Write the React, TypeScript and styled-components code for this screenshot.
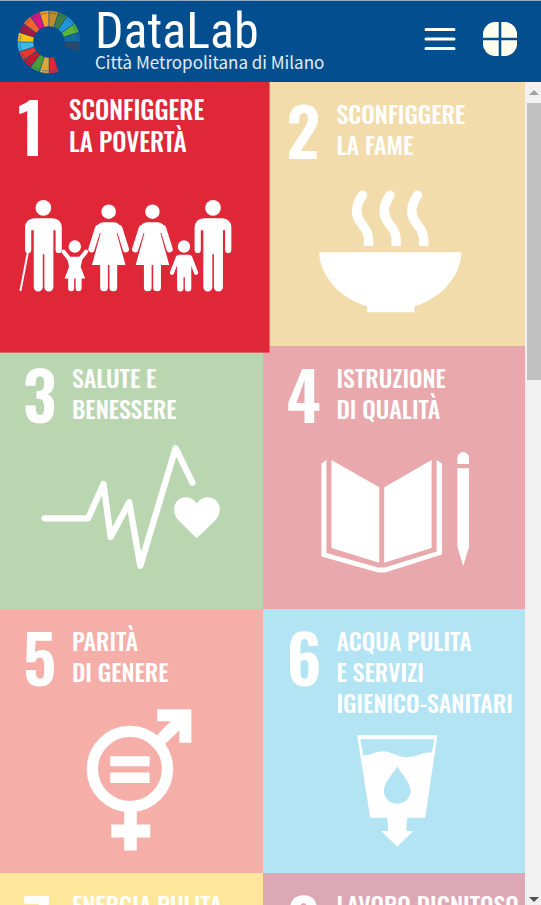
import React from "react";
import styled, { createGlobalStyle } from "styled-components";

const GlobalStyle = createGlobalStyle`
  *, *::before, *::after { box-sizing: border-box; }
  body { margin: 0; background: #fff; }
`;

const Page = styled.div`
  display: flex;
  flex-direction: column;
  height: 100vh;
  overflow: hidden;
`;

const Header = styled.header`
  flex: none;
  display: flex;
  align-items: center;
  height: 82px;
  padding: 0 24px 0 16px;
  border-top: 1px solid #8fa9c6;
  background: #034e8f;
  color: #fff;
`;

const Brand = styled.a`
  display: flex;
  align-items: center;
  gap: 13px;
  margin-right: auto;
  color: inherit;
  text-decoration: none;
  white-space: nowrap;
`;

const BrandText = styled.span`
  display: grid;
  padding-bottom: 2px;
`;

const BrandName = styled.span`
  font: 400 50px/42px "Roboto Condensed", Roboto, sans-serif;
`;

const BrandPlace = styled.span`
  font: 400 17px/20px "Noto Sans CJK SC", "Noto Sans", sans-serif;
  color: #e3ecf4;
`;

const Tools = styled.div`
  display: flex;
  align-items: center;
  gap: 26px;
  padding-bottom: 5px;
`;

const IconButton = styled.button`
  display: grid;
  place-items: center;
  padding: 0;
  border: 0;
  background: none;
  color: #fffff0;
  cursor: pointer;
`;

const Body = styled.div`
  flex: 1;
  display: flex;
  min-height: 0;
`;

const Goals = styled.main`
  flex: 1;
  display: grid;
  grid-template-columns: repeat(2, 1fr);
  align-content: start;
  overflow: hidden;
`;

const Tile = styled.a<{ $color: string; $active?: boolean }>`
  display: grid;
  aspect-ratio: 262 / 263;
  background: ${(p) => p.$color};
  color: #fff;
  text-decoration: none;
  font-family: Oswald, "Roboto Condensed", "Liberation Sans", sans-serif;
  ${(p) => p.$active && "position: relative; z-index: 1; transform: scale(1.05);"}

  > * { grid-area: 1 / 1; }
`;

const Heading = styled.span<{ $wide?: boolean }>`
  display: grid;
  grid-template-columns: ${(p) => (p.$wide ? "50px" : "49px")} 1fr;
  align-items: start;
  align-self: start;
  padding: 16px 0 0 ${(p) => (p.$wide ? "24px" : "23px")};
`;

const Numeral = styled.span`
  font-size: 66px;
  line-height: 62px;
  font-weight: 600;
`;

const Title = styled.span`
  font-size: 24px;
  line-height: 31px;
  font-weight: 500;
  white-space: pre;
`;

const Art = styled.svg`
  width: 100%;
  height: 100%;
  fill: #fff;
`;

const Scrollbar = styled.div`
  flex: none;
  display: flex;
  flex-direction: column;
  align-items: flex-end;
  width: 16px;
  background: #f1f1f1;
`;

const ScrollArrow = styled.button<{ $height: number }>`
  display: grid;
  place-items: center;
  width: 14px;
  height: ${(p) => p.$height}px;
  padding: 0;
  border: 0;
  background: none;
`;

const Track = styled.div`
  flex: 1;
  width: 14px;
`;

const Thumb = styled.div`
  height: 35%;
  background: #c1c1c1;
`;

const wheelColors = [
  "#e5243b", "#dda63a", "#4c9f38", "#c5192d", "#e5392d", "#3fb8e4",
  "#fcc30b", "#a21942", "#f1662c", "#dd1380", "#f99d26", "#bf8b2e",
  "#3f7e44", "#2398d8", "#5cb533", "#176a9d", "#2b4a6b",
];

function wheelSegment(index: number) {
  const point = (radius: number, degrees: number) => {
    const a = (degrees * Math.PI) / 180;
    return `${(32 + radius * Math.cos(a)).toFixed(2)} ${(32 + radius * Math.sin(a)).toFixed(2)}`;
  };
  const from = 72 + index * 18;
  const to = from + 18;
  return `M${point(31.5, from)}A31.5 31.5 0 0 1 ${point(31.5, to)}L${point(15.5, to)}A15.5 15.5 0 0 0 ${point(15.5, from)}Z`;
}

function Wheel() {
  return (
    <svg width="66" height="66" viewBox="-1 -1 66 66" aria-hidden="true">
      {wheelColors.map((color, i) => (
        <path key={color} d={wheelSegment(i)} fill={color} stroke="#034e8f" strokeWidth=".5" />
      ))}
      <circle cx="32" cy="32" r="29" fill="none" stroke="#034e8f" strokeWidth=".5" strokeDasharray="7 2.1" />
    </svg>
  );
}

const man =
  "M0 145a9 9 0 0 1 9-9h18.7a9 9 0 0 1 9 9v22.7a3.1 3.1 0 0 1-6.2 0V148h-2.2v56.7a4.5 4.5 0 0 1-9 0V172h-1.6v32.7a4.5 4.5 0 0 1-9 0V148H6.2v19.7a3.1 3.1 0 0 1-6.2 0z";

function Woman({ x }: { x: number }) {
  return (
    <g transform={`translate(${x} 0)`}>
      <circle cy="129.5" r="7.2" />
      <path d="M-13 147q2-7 8-7h10q6 0 8 7l-5 4 8.800 31.700h-33.500l8.700-31.700z" />
      <path d="M-10.600 146-17.200 167M10.600 146 17.200 167" stroke="#fff" strokeWidth="6.200" strokeLinecap="round" />
      <path d="M-8.500 180h7.700v25.200a3.850 3.850 0 0 1-7.700 0zM.8 180h7.700v25.200a3.850 3.850 0 0 1-7.700 0z" />
    </g>
  );
}

const Family = () => (
  <g transform="translate(6.240 6.270) scale(.952)">
    <circle cx="43.300" cy="125.700" r="7.800" />
    <path d={man} transform="translate(25 0)" />
    <path d="M28 169 20.500 208" stroke="#fff" strokeWidth="2" strokeLinecap="round" />
    <Woman x={108.5} />
    <Woman x={152.2} />
    <circle cx="212.700" cy="125.700" r="7.800" />
    <path d={man} transform="translate(194.300 0)" />
    <circle cx="74.700" cy="164.300" r="6.200" />
    <path d="M63.500 169.500 69 176.500M85.800 169.500 80.300 176.500" stroke="#fff" strokeWidth="4.200" strokeLinecap="round" />
    <path d="M69 174.400h11.500l1.500 4-1.500 6 4.500 11.800H64.500L69 184.300l-1.500-6zM68 195h6v11a3 3 0 0 1-6 0zM75.500 195h6v11a3 3 0 0 1-6 0z" />
    <circle cx="183.700" cy="164.300" r="6.200" />
    <path d="M177.500 175.500 171.700 190.500M190 175.500 195.800 190.500" stroke="#fff" strokeWidth="4.200" strokeLinecap="round" />
    <path d="M179 172.400h9.500q2.500 0 2.500 3V206a3.200 3.200 0 0 1-6.400 0v-11h-1.400v11a3.200 3.200 0 0 1-6.400 0v-30.600q0-3 2.200-3z" />
  </g>
);

const Bowl = () => (
  <g>
    <path d="M56 170h142c-1 23-18 45-47 54v5.700h-47V224C75 215 57 193 56 170z" />
    {[0, 27.5, 55].map((x) => (
      <g key={x} transform={`translate(${x} 0)`}>
        <circle cx="99.200" cy="113" r="4.700" />
        <path d="M99.200 113C92.500 123 92 131 96 138c4.500 7.500 10.500 10 9.300 25.700" fill="none" stroke="#fff" strokeWidth="9.400" />
      </g>
    ))}
  </g>
);

const Heartbeat = () => (
  <g>
    <path
      d="M44.500 172H88L103.300 137.700 110.500 190.700 129 156 140 219.300 175.300 102 192 136.300"
      fill="none" stroke="#fff" strokeWidth="6.300" strokeLinecap="round" strokeLinejoin="round"
    />
    <path d="M196.300 192 179 175C169 165 174 151 186 151c4 0 8 2.500 10.300 6.300C199 153.500 203 151 207 151c12 0 17 14 7 24z" />
  </g>
);

const Book = () => (
  <path d="M68.300 113.700 116 141v75.300L68.300 201.700zM121 141l47.300-27.300v88L121 216.300zM58.300 117.300l5-3.600v92.800L115 221h6.500l51.800-16V113.700l5.400 3.600V208L122 226h-7L58.300 210zM194 117.700v-6a5.850 5.850 0 0 1 11.700 0v6zM194 122h11.700v78.300l-5.900 19.400-5.800-19.400z" />
);

const Equality = () => (
  <g>
    <circle cx="129.700" cy="159.700" r="37.500" fill="none" stroke="#fff" strokeWidth="11.300" />
    <path d="M110 147h39.300v10H110zM110 163.300h39.300v10.400H110zM124 201h12.500v14H150v13h-13.500v13H124v-13h-13v-13h13zM157 100h34v33.500h-12V121l-15 14.500-8-9L170.500 112H157z" />
  </g>
);

const Water = () => (
  <path
    fillRule="evenodd"
    d="M94 126h80l-12 82.300h-18l-1 13.200h7l-16 15.800-16-15.800h7l-1-13.200h-17zM97 130l3 16c9 0 12-4 19-4 10 0 14 6 25 6 10 0 15-6 24.500-4.500L171 130zM134 157c3 7 13.300 15 13.300 24.500a13.300 12.800 0 0 1-26.600 0C120.700 172 131 164 134 157z"
  />
);

type Goal = {
  color: string;
  title: string;
  art?: () => React.JSX.Element;
};

const goals: Goal[] = [
  { color: "#df2738", title: "SCONFIGGERE\nLA POVERTÀ", art: Family },
  { color: "#f3dcac", title: "SCONFIGGERE\nLA FAME", art: Bowl },
  { color: "#b9d6b1", title: "SALUTE E\nBENESSERE", art: Heartbeat },
  { color: "#e8a8ac", title: "ISTRUZIONE\nDI QUALITÀ", art: Book },
  { color: "#f5afa8", title: "PARITÀ\nDI GENERE", art: Equality },
  { color: "#b3e4f4", title: "ACQUA PULITA\nE SERVIZI\nIGIENICO-SANITARI", art: Water },
  { color: "#fee79b", title: "ENERGIA PULITA" },
  { color: "#dda8b5", title: "LAVORO DIGNITOSO" },
];

export default function App() {
  return (
    <Page>
      <GlobalStyle />
      <Header>
        <Brand href="#home">
          <Wheel />
          <BrandText>
            <BrandName>DataLab</BrandName>
            <BrandPlace>Città Metropolitana di Milano</BrandPlace>
          </BrandText>
        </Brand>
        <Tools>
          <IconButton aria-label="Menu">
            <svg width="34" height="34" viewBox="0 0 34 34" stroke="currentColor" strokeWidth="3" strokeLinecap="round">
              <path d="M3 7.500h28M3 17h28M3 26.500h28" />
            </svg>
          </IconButton>
          <IconButton aria-label="Dashboard">
            <svg width="34" height="34" viewBox="0 0 34 34" fill="currentColor">
              <path d="M15.700 0v15.700H0V11C1 5 5 1 11 0zM18.300 0H23c6 1 10 5 11 11v4.700H18.300zM0 18.300h15.700V34H11C5 33 1 29 0 23zM18.300 18.300H34V23c-1 6-5 10-11 11h-4.700z" />
            </svg>
          </IconButton>
        </Tools>
      </Header>
      <Body>
        <Goals>
          {goals.map(({ color, title, art: Drawing }, i) => (
            <Tile key={title} href={`#goal-${i + 1}`} $color={color} $active={i === 0}>
              <Heading $wide={i % 2 === 1}>
                <Numeral>{i + 1}</Numeral>
                <Title>{title}</Title>
              </Heading>
              {Drawing && (
                <Art viewBox="0 0 262 263" aria-hidden="true">
                  <Drawing />
                </Art>
              )}
            </Tile>
          ))}
        </Goals>
        <Scrollbar>
          <ScrollArrow $height={21} aria-label="Scroll up">
            <svg width="10" height="5" viewBox="0 0 10 5"><path d="M0 5 5 0l5 5z" fill="#a3a3a3" /></svg>
          </ScrollArrow>
          <Track><Thumb /></Track>
          <ScrollArrow $height={12} aria-label="Scroll down">
            <svg width="10" height="5" viewBox="0 0 10 5"><path d="M0 0h10L5 5z" fill="#505050" /></svg>
          </ScrollArrow>
        </Scrollbar>
      </Body>
    </Page>
  );
}
